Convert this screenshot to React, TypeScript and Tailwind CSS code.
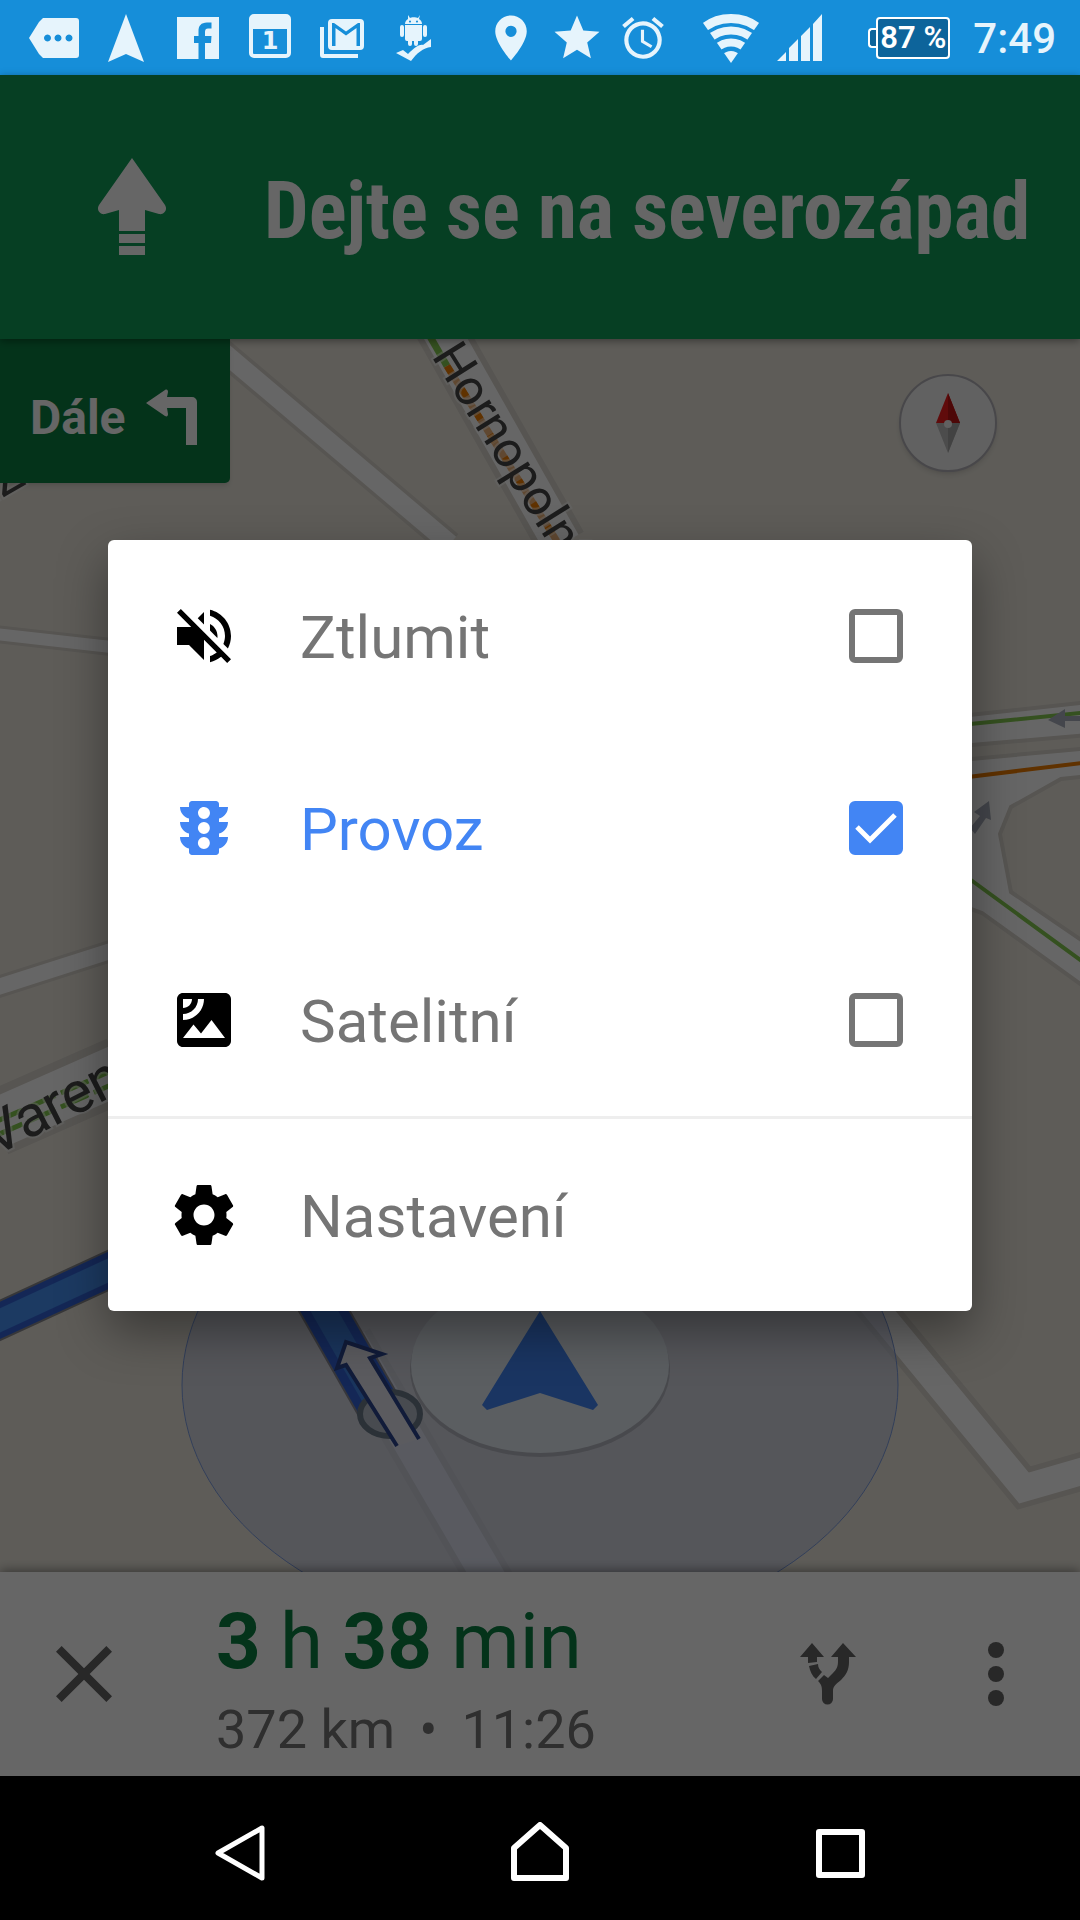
import { useState } from 'react';
import type { ReactNode } from 'react';
import { MdAlarm, MdClose, MdPlace, MdSatellite, MdStar, MdTraffic } from 'react-icons/md';

function StatusBar() {
  return (
    <header className="flex h-[75px] items-center bg-[#168ed9] pl-[18px] text-[#e6f4fc]">
      <div className="flex">
        <span className="flex w-[72px] justify-center">
          <svg className="h-12 w-[50px]" viewBox="0 0 50 48" fill="currentColor">
            <path fillRule="evenodd" d="M14 4H47a3 3 0 0 1 3 3V41a3 3 0 0 1-3 3H14L10 40 0 24 10 8ZM18.500 20.500a3.500 3.500 0 1 0 0.010 0ZM29 20.500a3.500 3.500 0 1 0 .01 0ZM40 20.500a3.500 3.500 0 1 0 .01 0Z" />
          </svg>
        </span>
        <span className="flex w-[72px] justify-center">
          <svg className="h-12 w-9" viewBox="0 0 36 48" fill="currentColor">
            <path d="M18 0 36 48 18 40 0 48Z" />
          </svg>
        </span>
        <span className="flex w-[72px] justify-center">
          <svg className="h-12 w-[42px]" viewBox="0 0 42 48" fill="currentColor">
            <path d="M0 3H42V45H28V29H34L34.500 22H28V18C28 15.500 29 14.500 31 14.500H34.500V8.500H30C24 8.500 21.500 12 21.500 17V22H17V29H21.500V45H0Z" />
          </svg>
        </span>
        <span className="flex w-[72px] justify-center">
          <span className="flex h-11 w-[42px] justify-center rounded-[5px] border-4 border-t-[15px] border-current text-[24px] leading-[24px] font-bold font-['DejaVu_Sans',sans-serif]">
            1
          </span>
        </span>
        <span className="flex w-[72px] justify-center">
          <svg className="h-12 w-11" viewBox="0 0 44 48" fill="currentColor">
            <path d="M0 13H4V40H38V44H3a3 3 0 0 1-3-3Z" />
            <path fillRule="evenodd" d="M12 5H40a4 4 0 0 1 4 4V32a4 4 0 0 1-4 4H12a4 4 0 0 1-4-4V9a4 4 0 0 1 4-4ZM12 9V32H15.500V14L26 21.500 36.500 14V32H40V9H38L26 17.500 14 9Z" />
          </svg>
        </span>
        <span className="flex w-[72px] justify-center">
          <svg className="h-12 w-9" viewBox="0 0 36 48" fill="currentColor">
            <path fillRule="evenodd" d="M12 1 14 4C15 3 20 3 22 4L24 1 23 5C25 6 26 8 26 10H9C9 8 10 6 12 5ZM14 6.500a1 1 0 1 0 .01 0ZM21 6.500a1 1 0 1 0 .01 0Z" />
            <path d="M9 11H26V25a2 2 0 0 1-2 2H22V30a2 2 0 0 1-4 0V27H16V30a2 2 0 0 1-4 0V27H11a2 2 0 0 1-2-2Z" />
            <rect x="4" y="11" width="4" height="12" rx="2" />
            <rect x="27" y="11" width="4" height="12" rx="2" />
            <path d="M0 39 7 36 12 40C19 33 24 30 27 31L35 25V33C27 34 21 39 15 47Z" />
          </svg>
        </span>
      </div>

      <div className="ml-auto flex items-center pr-6">
        <span className="flex w-[66px] justify-center">
          <MdPlace className="size-[54px]" />
        </span>
        <span className="flex w-[66px] justify-center">
          <MdStar className="size-[54px]" />
        </span>
        <span className="flex w-[66px] justify-center">
          <MdAlarm className="size-[50px]" />
        </span>
        <svg className="ml-[26px] h-[50px] w-[58px]" viewBox="0 0 58 50">
          <clipPath id="wifi">
            <path d="M29 50-6 0H64Z" />
          </clipPath>
          <g clipPath="url(#wifi)" fill="none" stroke="currentColor">
            <circle cx="29" cy="50" r="44.500" strokeWidth="9" />
            <circle cx="29" cy="50" r="32.500" strokeWidth="8" />
            <circle cx="29" cy="50" r="20.500" strokeWidth="8" />
            <circle cx="29" cy="50" r="6" strokeWidth="12" />
          </g>
        </svg>
        <svg className="ml-[17px] h-[47px] w-[45px]" viewBox="0 0 45 47" fill="currentColor">
          <path d="M0 47 9 38V47ZM12 34 21 25V47H12ZM24 22 33 13V47H24ZM36 10 45 0V47H36Z" />
        </svg>
        <div className="ml-[46px] flex items-center">
          <span className="h-5 w-2 rounded-l-sm border-2 border-r-0 border-white bg-[#0d649b]" />
          <span className="flex h-[42px] w-[74px] items-center justify-center rounded-sm border-2 border-white bg-[#0d649b] text-[31px] leading-none font-semibold whitespace-nowrap text-white">
            87 %
          </span>
        </div>
        <time className="ml-[23px] pt-[2px] text-[42px] leading-none font-medium">7:49</time>
      </div>
    </header>
  );
}

function DirectionBanner() {
  return (
    <section className="relative z-10 flex h-[264px] items-center bg-[#0f9d58] text-white shadow-[0_2px_8px_rgba(0,0,0,0.4)]">
      <div className="flex w-[264px] shrink-0 justify-center">
        <svg className="h-[98px] w-[68px]" viewBox="0 0 68 98" fill="currentColor">
          <path d="M34 0 67 47C70 52 66 57 61 56L47 52V73H21V52L7 56C2 57-2 52 1 47ZM21 76H47V85H21ZM21 88H47V97H21Z" />
        </svg>
      </div>
      <h1 className="pt-2 text-[79px] leading-none font-bold whitespace-nowrap font-['Roboto_Condensed','Liberation_Sans_Narrow',Roboto,sans-serif]">
        Dejte se na severozápad
      </h1>
    </section>
  );
}

function MapDrawing() {
  return (
    <svg
      className="absolute inset-0 size-full"
      viewBox="0 339 1080 1233"
      preserveAspectRatio="xMidYMid slice"
      fill="none"
    >
      {/* casings */}
      <g stroke="#d9d4cc">
        <path d="M190 324 450 544" strokeWidth="26" />
        <path d="M438 325 562 544" strokeWidth="50" />
        <path d="M-5 634 120 648" strokeWidth="18" />
        <path d="M-5 988 120 948" strokeWidth="22" />
        <path d="M-5 1124 120 1069" strokeWidth="66" />
        <path d="M860 1289 1024 1488 1090 1469" strokeWidth="38" />
        <path d="M350 1340 500 1597" strokeWidth="46" />
      </g>
      {/* roads */}
      <g stroke="#fff">
        <path d="M190 324 450 544" strokeWidth="19" />
        <path d="M438 325 562 544" strokeWidth="38" />
        <path d="M-5 634 120 648" strokeWidth="12" />
        <path d="M-5 988 120 948" strokeWidth="16" />
        <path d="M-5 1124 120 1069" strokeWidth="50" />
        <path d="M860 1289 1024 1488 1090 1469" strokeWidth="27" />
        <path d="M350 1340 500 1597" strokeWidth="33" />
      </g>

      {/* junction on the right */}
      <g stroke="#d9d4cc" strokeWidth="4">
        <path d="M960 716 1090 702V735L960 746Z" fill="#fff" />
        <path d="M960 760 1090 748V991L982 913 960 905Z" fill="#fff" />
        <path d="M1000 834 1011 807 1061 779 1090 776V946L1011 892Z" fill="#ebe7dd" />
      </g>
      <path d="M960 725 1090 712M960 872 1090 967" stroke="#84ca50" strokeWidth="4" />
      <path d="M960 778 1090 762" stroke="#f07d02" strokeWidth="4" />
      <path d="M1048 720 1065 709V716H1080V721H1065V728Z" fill="#aab0bd" />
      <path d="M970 828 980 816 974 812 989 801 991 820 986 818 975 834Z" fill="#aab0bd" />

      {/* traffic */}
      <path d="M428 333 447 366" stroke="#84ca50" strokeWidth="7" />
      <path d="M447 366 560 546" stroke="#f0b57c" strokeWidth="7" />
      <path d="M447 366 560 546" stroke="#f07d02" strokeWidth="7" strokeDasharray="9 18" />
      <path d="M-5 1122 120 1067M-5 1136 120 1081" stroke="#84ca50" strokeWidth="5" strokeDasharray="30 6" />

      <g
        className="font-[Roboto,sans-serif]"
        fill="#484848"
        stroke="#fff"
        strokeOpacity="0.5"
        strokeWidth="4"
        paintOrder="stroke"
        fontSize="50"
      >
        <text transform="translate(431 356) rotate(58)">Hornopolní</text>
        <text transform="translate(-6 1157) rotate(-27)" fontSize="58">
          Varenská
        </text>
        <text transform="translate(-22 512) rotate(-30)">nZ</text>
      </g>

      {/* route to the left */}
      <path d="M-10 1325 120 1265" stroke="#8a8a90" strokeWidth="38" />
      <path d="M-10 1325 120 1265" stroke="#3263d8" strokeWidth="34" />
      <path d="M-10 1325 120 1265" stroke="#4691f5" strokeWidth="22" />

      {/* accuracy area, current leg and position puck */}
      <ellipse cx="540" cy="1385" rx="358" ry="250" fill="#c3cbe6" fillOpacity="0.55" stroke="#7c9ce0" />
      <path d="M314 1293 378 1405" stroke="#8a8a94" strokeWidth="46" />
      <path d="M314 1293 378 1405" stroke="#3263d8" strokeWidth="42" />
      <path d="M314 1293 378 1405" stroke="#4186e8" strokeWidth="24" />
      <ellipse cx="390" cy="1414" rx="30" ry="22" fill="#b4bcc8" stroke="#6c7a8a" strokeWidth="6" />
      <path
        d="M397 1446 346 1365 337 1368 346 1342 382 1354 370 1358 419 1439"
        fill="#e3e3ee"
        stroke="#2b4590"
        strokeWidth="4"
      />
      <ellipse cx="540" cy="1369" rx="130" ry="88" fill="#000" fillOpacity="0.15" />
      <ellipse cx="540" cy="1365" rx="129" ry="88" fill="#e3ebf3" />
      <path d="M540 1311 598 1405 593 1410 540 1393 487 1410 482 1405Z" fill="#4285f4" />
    </svg>
  );
}

function MapView() {
  return (
    <section className="relative flex-1 overflow-hidden bg-[#ebe7dd]">
      <MapDrawing />
      <div className="relative flex items-start justify-between">
        <div className="flex h-36 w-[230px] items-center gap-5 rounded-br-[5px] bg-[#0b8043] pt-3 pl-[30px] text-white shadow-md">
          <span className="pt-[2px] text-[48px] leading-none font-bold">Dále</span>
          <svg className="h-14 w-[51px] shrink-0" viewBox="0 0 51 56" fill="currentColor">
            <path d="M0 14 19 1C21 0 22 1 22 3L21 8H46a5 5 0 0 1 5 5V56H40V19H21L22 25C22 27 21 28 19 27Z" />
          </svg>
        </div>
        <button
          aria-label="Kompas"
          className="mt-[35px] mr-[83px] flex size-[98px] items-center justify-center rounded-full border-2 border-[#b4b2b8] bg-[#f2f2f2] shadow-md"
        >
          <svg className="h-[60px] w-6" viewBox="0 0 24 60">
            <path d="M12 0 24 30H0Z" fill="#f01d1d" />
            <path d="M12 0 24 30H12Z" fill="#c01515" />
            <path d="M0 30H24L12 60Z" fill="#bdbdbd" />
            <path d="M12 30H24L12 60Z" fill="#a6a6a6" />
            <circle cx="12" cy="31" r="4" fill="#f2f2f2" />
          </svg>
        </button>
      </div>
    </section>
  );
}

function TripBar() {
  return (
    <footer className="relative flex h-[204px] items-center bg-white text-[#646464] shadow-[0_-2px_10px_rgba(0,0,0,0.4)]">
      <button aria-label="Zavřít" className="flex w-[168px] justify-center">
        <MdClose className="size-24" />
      </button>
      <div className="ml-12 pt-6 pb-2">
        <p className="text-[78px] leading-[96px] text-[#0b8043]">
          <b>3</b> h <b>38</b> min
        </p>
        <p className="flex gap-6 text-[54px] leading-[80px] text-[#757575]">
          <span>372 km</span>
          <span>•</span>
          <span>11:26</span>
        </p>
      </div>
      <button aria-label="Alternativní trasy" className="ml-auto flex w-[168px] justify-center">
        <svg className="h-[62px] w-14" viewBox="0 0 56 62" fill="currentColor">
          <path d="M0 14 12 0 24 14H17V19L8 20V14ZM9 23 18 21C18 25 20 27 22 29L16 36C12 33 10 28 9 23ZM18 38 24 32 28 35 33 30C37 26 38 23 38 18V14H31L43 0 56 14H49V19C49 27 46 32 41 37 36 41 33 43 33 48V56a5 5 0 0 1-11 0V48C22 43 21 41 18 38Z" />
        </svg>
      </button>
      <button aria-label="Další možnosti" className="flex w-[168px] justify-center">
        <svg className="h-16 w-4" viewBox="0 0 16 64" fill="currentColor">
          <circle cx="8" cy="8" r="8" />
          <circle cx="8" cy="32" r="8" />
          <circle cx="8" cy="56" r="8" />
        </svg>
      </button>
    </footer>
  );
}

interface ToggleRowProps {
  icon: ReactNode;
  label: string;
  initial?: boolean;
}

function ToggleRow({ icon, label, initial = false }: ToggleRowProps) {
  const [checked, setChecked] = useState(initial);

  return (
    <label className={`flex h-48 items-center px-[60px] ${checked ? 'text-[#4285f4]' : 'text-[#757575]'}`}>
      <span className={checked ? 'text-[#4285f4]' : 'text-black'}>{icon}</span>
      <span className="ml-[60px] pt-1 text-[60px] leading-none">{label}</span>
      <span className="relative mr-[9px] ml-auto size-[54px]">
        <input
          type="checkbox"
          checked={checked}
          onChange={() => setChecked(!checked)}
          className="block size-full appearance-none rounded-md border-[6px] border-[#757575] checked:border-[#4285f4] checked:bg-[#4285f4]"
        />
        {checked && (
          <svg className="pointer-events-none absolute inset-0 size-full" viewBox="0 0 54 54" fill="none">
            <path d="M8 26 21 39 46 14" stroke="#fff" strokeWidth="5" />
          </svg>
        )}
      </span>
    </label>
  );
}

function MutedIcon() {
  return (
    <svg className="size-[72px]" viewBox="0 0 24 24" fill="currentColor">
      <path d="M16.500 12c0-1.770-1.020-3.290-2.500-4.030v2.210l2.450 2.450c.03-.2.050-.41.050-.63zm2.500 0c0 .94-.2 1.820-.54 2.640l1.510 1.510C20.630 14.910 21 13.500 21 12c0-4.280-2.990-7.860-7-8.770v2.060c2.890.86 5 3.540 5 6.710zM4.270 3 3 4.270 7.730 9H3v6h4l5 5v-6.730l4.250 4.250c-.67.520-1.420.930-2.250 1.180v2.060c1.380-.31 2.630-.95 3.690-1.810L19.730 21 21 19.730l-9-9L4.270 3zM12 4 9.910 6.090 12 8.180V4z" />
    </svg>
  );
}

function GearIcon() {
  return (
    <svg className="size-[72px]" viewBox="0 0 24 24" fill="currentColor">
      <path d="M19.43 12.98c.04-.32.07-.64.07-.98s-.03-.66-.07-.98l2.11-1.65c.19-.15.24-.42.12-.64l-2-3.46c-.12-.22-.39-.3-.61-.22l-2.49 1c-.52-.4-1.08-.73-1.69-.98l-.38-2.65C14.46 2.18 14.25 2 14 2h-4c-.25 0-.46.18-.49.42l-.38 2.65c-.61.25-1.17.59-1.69.98l-2.49-1c-.23-.09-.49 0-.61.22l-2 3.46c-.13.22-.07.49.12.64l2.11 1.65c-.04.32-.07.65-.07.98s.03.66.07.98l-2.11 1.65c-.19.15-.24.42-.12.64l2 3.46c.12.22.39.3.61.22l2.49-1c.52.4 1.08.73 1.69.98l.38 2.65c.03.24.24.42.49.42h4c.25 0 .46-.18.49-.42l.38-2.65c.61-.25 1.17-.59 1.69-.98l2.49 1c.23.09.49 0 .61-.22l2-3.46c.12-.22.07-.49-.12-.64l-2.11-1.65zM12 15.5c-1.93 0-3.5-1.57-3.5-3.5s1.57-3.5 3.5-3.5 3.5 1.57 3.5 3.5-1.57 3.5-3.5 3.5z" />
    </svg>
  );
}

function OptionsDialog() {
  return (
    <div className="absolute inset-0 z-20 flex items-center justify-center bg-black/60">
      <div role="dialog" aria-label="Možnosti" className="w-4/5 rounded-md bg-white shadow-[0_20px_50px_rgba(0,0,0,0.4)]">
        <ToggleRow icon={<MutedIcon />} label="Ztlumit" />
        <ToggleRow icon={<MdTraffic className="size-[72px]" />} label="Provoz" initial />
        <ToggleRow icon={<MdSatellite className="size-[72px]" />} label="Satelitní" />
        <button className="flex h-[195px] w-full items-center border-t-[3px] border-[#eee] px-[60px] text-[#757575]">
          <span className="text-black">
            <GearIcon />
          </span>
          <span className="ml-[60px] pt-1 text-[60px] leading-none">Nastavení</span>
        </button>
      </div>
    </div>
  );
}

function NavigationBar() {
  return (
    <nav className="flex h-36 items-center bg-black px-[90px] pt-2 text-white">
      <button aria-label="Zpět" className="flex flex-1 justify-center">
        <svg className="size-[60px]" viewBox="0 0 60 60" fill="none" stroke="currentColor" strokeWidth="5" strokeLinejoin="round">
          <path d="M52 6V56L8 31Z" />
        </svg>
      </button>
      <button aria-label="Domů" className="flex flex-1 justify-center">
        <svg className="size-[60px]" viewBox="0 0 60 60" fill="none" stroke="currentColor" strokeWidth="6" strokeLinejoin="round">
          <path d="M4 56V26L30 3 56 26V56Z" />
        </svg>
      </button>
      <button aria-label="Poslední aplikace" className="flex flex-1 justify-center">
        <svg className="size-[60px]" viewBox="0 0 60 60" fill="none" stroke="currentColor" strokeWidth="6" strokeLinejoin="round">
          <rect x="9" y="10" width="43" height="43" />
        </svg>
      </button>
    </nav>
  );
}

export default function App() {
  return (
    <div className="flex min-h-screen flex-col font-[Roboto,sans-serif]">
      <StatusBar />
      <main className="relative flex flex-1 flex-col">
        <DirectionBanner />
        <MapView />
        <TripBar />
        <OptionsDialog />
      </main>
      <NavigationBar />
    </div>
  );
}
